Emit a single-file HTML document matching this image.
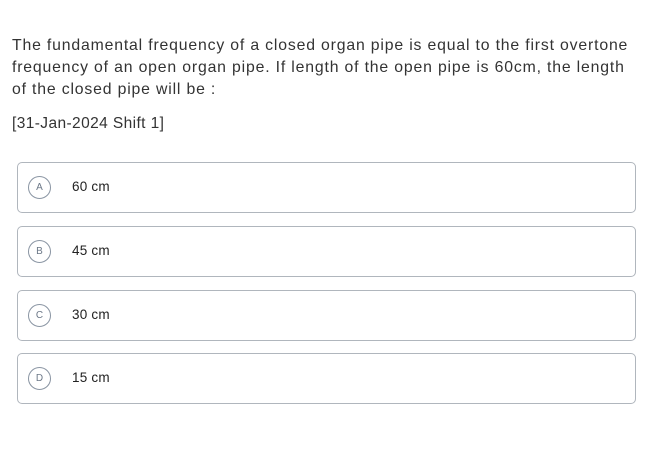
<!DOCTYPE html>
<html><head><style>
body{margin:0;background:#fff;font-family:"Liberation Sans",sans-serif;color:#333;}
.q{position:absolute;left:12px;top:35px;width:640px;font-size:15.8px;line-height:22px;letter-spacing:0.83px;white-space:nowrap;}
.s{position:absolute;left:12px;top:115px;font-size:15.5px;letter-spacing:0.4px;}
.o{position:absolute;left:17px;width:617px;height:49px;border:1px solid #b0b6bd;border-radius:5px;}
.c{position:absolute;left:10px;top:13px;width:21px;height:21px;border:1.3px solid #8a95a3;border-radius:50%;font-size:10px;color:#6b7787;text-align:center;line-height:21px;}
.t{position:absolute;left:54px;top:16px;font-size:13.5px;color:#222;letter-spacing:0.2px;}
</style></head><body>
<div class="q">The fundamental frequency of a closed organ pipe is equal to the first overtone<br>frequency of an open organ pipe. If length of the open pipe is 60cm, the length<br>of the closed pipe will be :</div>
<div class="s">[31-Jan-2024 Shift 1]</div>
<div class="o" style="top:162px"><div class="c">A</div><div class="t">60 cm</div></div>
<div class="o" style="top:226px"><div class="c">B</div><div class="t">45 cm</div></div>
<div class="o" style="top:290px"><div class="c">C</div><div class="t">30 cm</div></div>
<div class="o" style="top:353px"><div class="c">D</div><div class="t">15 cm</div></div>
</body></html>
